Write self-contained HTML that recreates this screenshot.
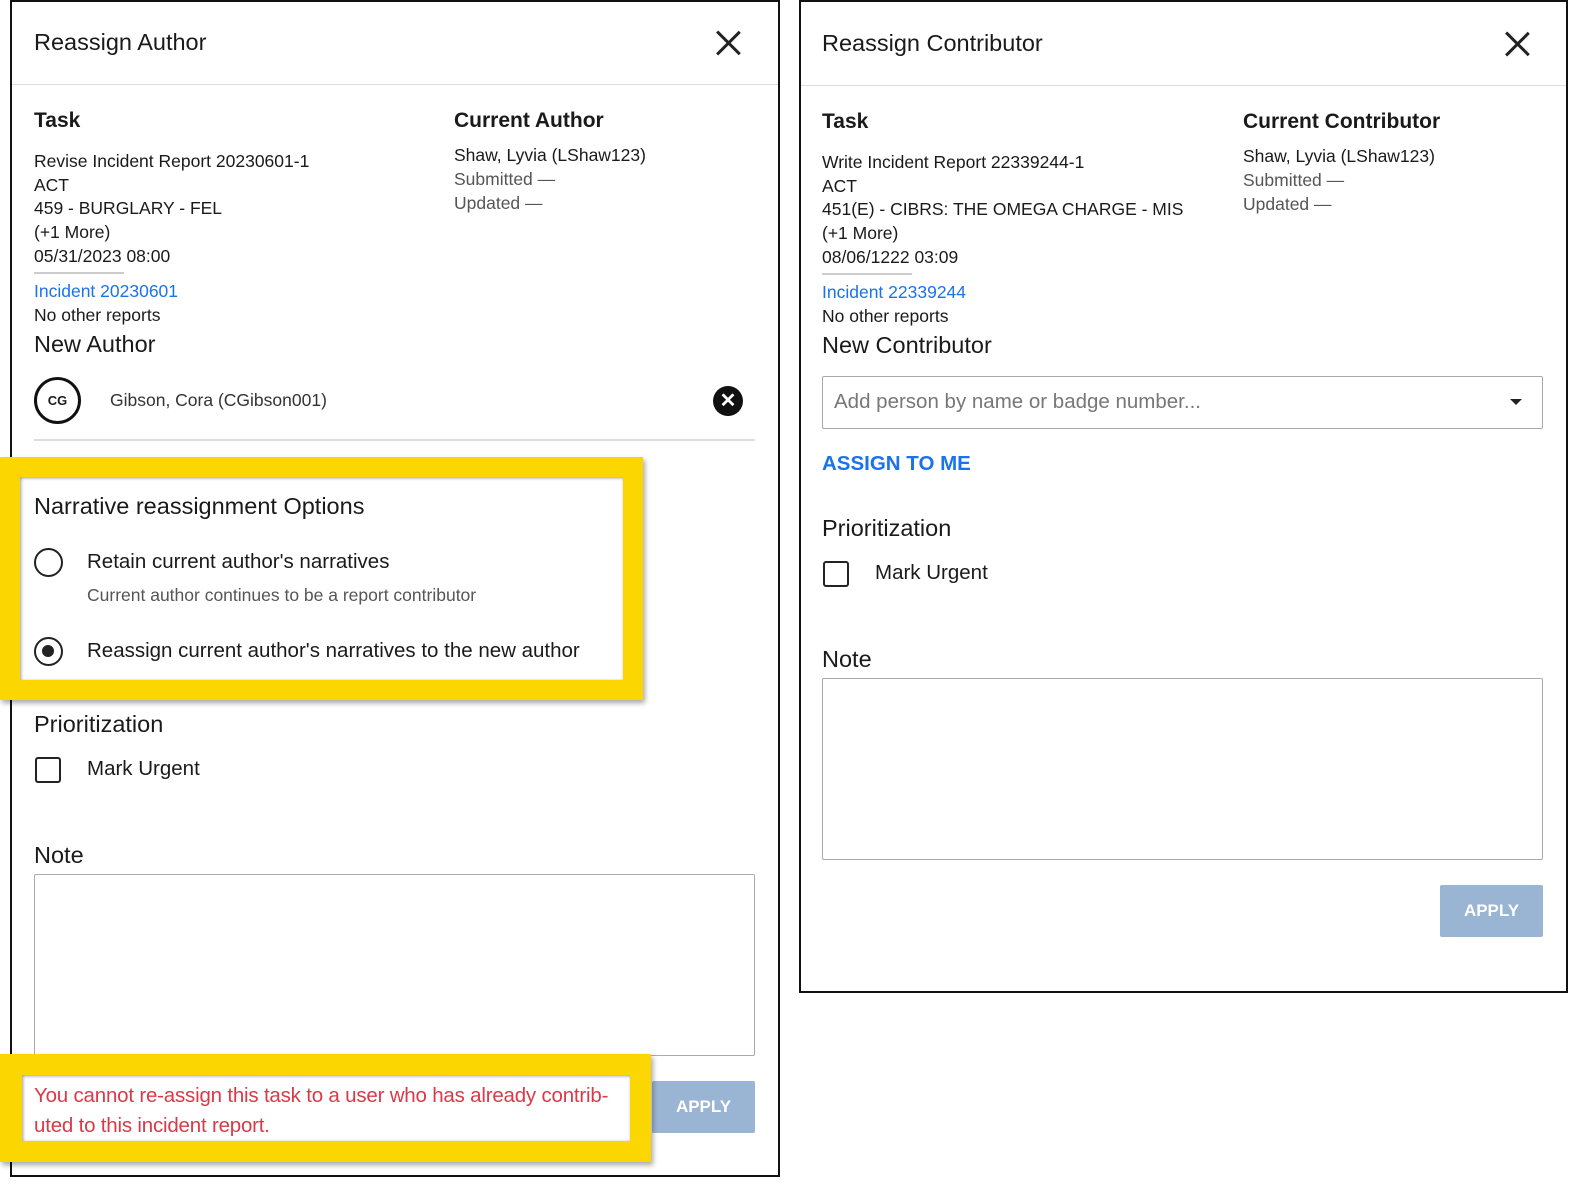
<!DOCTYPE html>
<html><head><meta charset="utf-8"><style>
*{margin:0;padding:0;box-sizing:border-box}
body{width:1591px;height:1194px;background:#fff;position:relative;overflow:hidden;font-family:"Liberation Sans",sans-serif;color:#1a1a1a}
.a{position:absolute;white-space:nowrap}
.h{font-size:21px}
.b{font-weight:bold}
.t{font-size:17.5px}
.g{color:#555}
.l{color:#1a73e8}
.x{position:absolute;width:26px;height:26px}
.x:before,.x:after{content:"";position:absolute;left:12px;top:-3px;width:2.5px;height:32px;background:#222}
.x:before{transform:rotate(45deg)}.x:after{transform:rotate(-45deg)}
</style></head><body>
<!-- left panel -->
<div class="a" style="left:10px;top:0;width:770px;height:1177px;border:2px solid #111"></div>
<div class="a" style="left:12px;top:84px;width:766px;height:1px;background:#ddd"></div>
<div class="a" style="left:34px;top:29px;font-size:23.5px">Reassign Author</div>
<div class="x" style="left:715px;top:30px"></div>
<div class="a h b" style="left:34px;top:109px">Task</div>
<div class="a h b" style="left:454px;top:109px">Current Author</div>
<div class="a t" style="left:34px;top:151px">Revise Incident Report 20230601-1</div>
<div class="a t" style="left:34px;top:175px">ACT</div>
<div class="a t" style="left:34px;top:198px">459 - BURGLARY - FEL</div>
<div class="a t" style="left:34px;top:222px">(+1 More)</div>
<div class="a t" style="left:34px;top:246px">05/31/2023 08:00</div>
<div class="a" style="left:34px;top:272px;width:90px;height:2px;background:#ccc"></div>
<div class="a t l" style="left:34px;top:281px">Incident 20230601</div>
<div class="a t" style="left:34px;top:305px">No other reports</div>
<div class="a t" style="left:454px;top:145px">Shaw, Lyvia (LShaw123)</div>
<div class="a t g" style="left:454px;top:169px">Submitted —</div>
<div class="a t g" style="left:454px;top:193px">Updated —</div>
<div class="a" style="left:34px;top:331px;font-size:23.5px">New Author</div>
<div class="a" style="left:34px;top:377px;width:47px;height:47px;border:3px solid #111;border-radius:50%;font-size:13px;font-weight:bold;text-align:center;line-height:41px">CG</div>
<div class="a t" style="left:110px;top:390px;color:#333">Gibson, Cora (CGibson001)</div>
<div class="a" style="left:713px;top:386px;width:30px;height:30px;border-radius:50%;background:#111;color:#fff;text-align:center;line-height:30px;font-size:20px;font-weight:bold">✕</div>
<div class="a" style="left:34px;top:439px;width:721px;height:2px;background:#ddd"></div>
<!-- yellow box 1 -->
<div class="a" style="left:0;top:457px;width:643px;height:243px;background:#fcd601;box-shadow:2px 3px 5px rgba(0,0,0,.35)"></div>
<div class="a" style="left:20px;top:477px;width:603px;height:203px;background:#fff;box-shadow:inset 1px 1px 3px rgba(0,0,0,.4)"></div>
<div class="a" style="left:34px;top:493px;font-size:23.5px">Narrative reassignment Options</div>
<div class="a" style="left:34px;top:548px;width:29px;height:29px;border:2.5px solid #222;border-radius:50%"></div>
<div class="a" style="left:87px;top:550px;font-size:20.5px">Retain current author's narratives</div>
<div class="a g" style="left:87px;top:585px;font-size:17.5px">Current author continues to be a report contributor</div>
<div class="a" style="left:34px;top:637px;width:29px;height:29px;border:2.5px solid #222;border-radius:50%"><div style="position:absolute;left:6px;top:6px;width:12px;height:12px;border-radius:50%;background:#222"></div></div>
<div class="a" style="left:87px;top:639px;font-size:20.5px">Reassign current author's narratives to the new author</div>
<div class="a" style="left:34px;top:711px;font-size:23.5px">Prioritization</div>
<div class="a" style="left:35px;top:757px;width:26px;height:26px;border:2.5px solid #222;border-radius:3px"></div>
<div class="a" style="left:87px;top:757px;font-size:20.5px">Mark Urgent</div>
<div class="a" style="left:34px;top:842px;font-size:23.5px">Note</div>
<div class="a" style="left:34px;top:874px;width:721px;height:182px;border:1px solid #aaa;border-radius:2px"></div>
<div class="a" style="left:652px;top:1081px;width:103px;height:52px;background:#9ab4d4;border-radius:2px;color:#fff;font-weight:bold;font-size:17px;text-align:center;line-height:52px">APPLY</div>
<!-- yellow box 2 -->
<div class="a" style="left:0;top:1054px;width:651px;height:108px;background:#fcd601;box-shadow:2px 3px 5px rgba(0,0,0,.35)"></div>
<div class="a" style="left:22px;top:1075px;width:608px;height:66px;background:#fff;box-shadow:inset 1px 1px 3px rgba(0,0,0,.4)"></div>
<div class="a" style="left:34px;top:1081px;font-size:20.5px;color:#d93a48;line-height:30px;letter-spacing:-0.2px">You cannot re-assign this task to a user who has already contrib-<br>uted to this incident report.</div>
<!-- right panel -->
<div class="a" style="left:799px;top:0;width:769px;height:993px;border:2px solid #111"></div>
<div class="a" style="left:801px;top:85px;width:765px;height:1px;background:#ddd"></div>
<div class="a" style="left:822px;top:30px;font-size:23.5px">Reassign Contributor</div>
<div class="x" style="left:1504px;top:31px"></div>
<div class="a h b" style="left:822px;top:110px">Task</div>
<div class="a h b" style="left:1243px;top:110px">Current Contributor</div>
<div class="a t" style="left:822px;top:152px">Write Incident Report 22339244-1</div>
<div class="a t" style="left:822px;top:176px">ACT</div>
<div class="a t" style="left:822px;top:199px">451(E) - CIBRS: THE OMEGA CHARGE - MIS</div>
<div class="a t" style="left:822px;top:223px">(+1 More)</div>
<div class="a t" style="left:822px;top:247px">08/06/1222 03:09</div>
<div class="a" style="left:822px;top:273px;width:90px;height:2px;background:#ccc"></div>
<div class="a t l" style="left:822px;top:282px">Incident 22339244</div>
<div class="a t" style="left:822px;top:306px">No other reports</div>
<div class="a t" style="left:1243px;top:146px">Shaw, Lyvia (LShaw123)</div>
<div class="a t g" style="left:1243px;top:170px">Submitted —</div>
<div class="a t g" style="left:1243px;top:194px">Updated —</div>
<div class="a" style="left:822px;top:332px;font-size:23.5px">New Contributor</div>
<div class="a" style="left:822px;top:376px;width:721px;height:53px;border:1px solid #aaa;border-radius:2px"></div>
<div class="a" style="left:834px;top:390px;font-size:20.5px;color:#777">Add person by name or badge number...</div>
<div class="a" style="left:1510px;top:399px;width:0;height:0;border-left:6px solid transparent;border-right:6px solid transparent;border-top:6px solid #222"></div>
<div class="a b l" style="left:822px;top:452px;font-size:20.5px">ASSIGN TO ME</div>
<div class="a" style="left:822px;top:515px;font-size:23.5px">Prioritization</div>
<div class="a" style="left:823px;top:561px;width:26px;height:26px;border:2.5px solid #222;border-radius:3px"></div>
<div class="a" style="left:875px;top:561px;font-size:20.5px">Mark Urgent</div>
<div class="a" style="left:822px;top:646px;font-size:23.5px">Note</div>
<div class="a" style="left:822px;top:678px;width:721px;height:182px;border:1px solid #aaa;border-radius:2px"></div>
<div class="a" style="left:1440px;top:885px;width:103px;height:52px;background:#9ab4d4;border-radius:2px;color:#fff;font-weight:bold;font-size:17px;text-align:center;line-height:52px">APPLY</div>
</body></html>
